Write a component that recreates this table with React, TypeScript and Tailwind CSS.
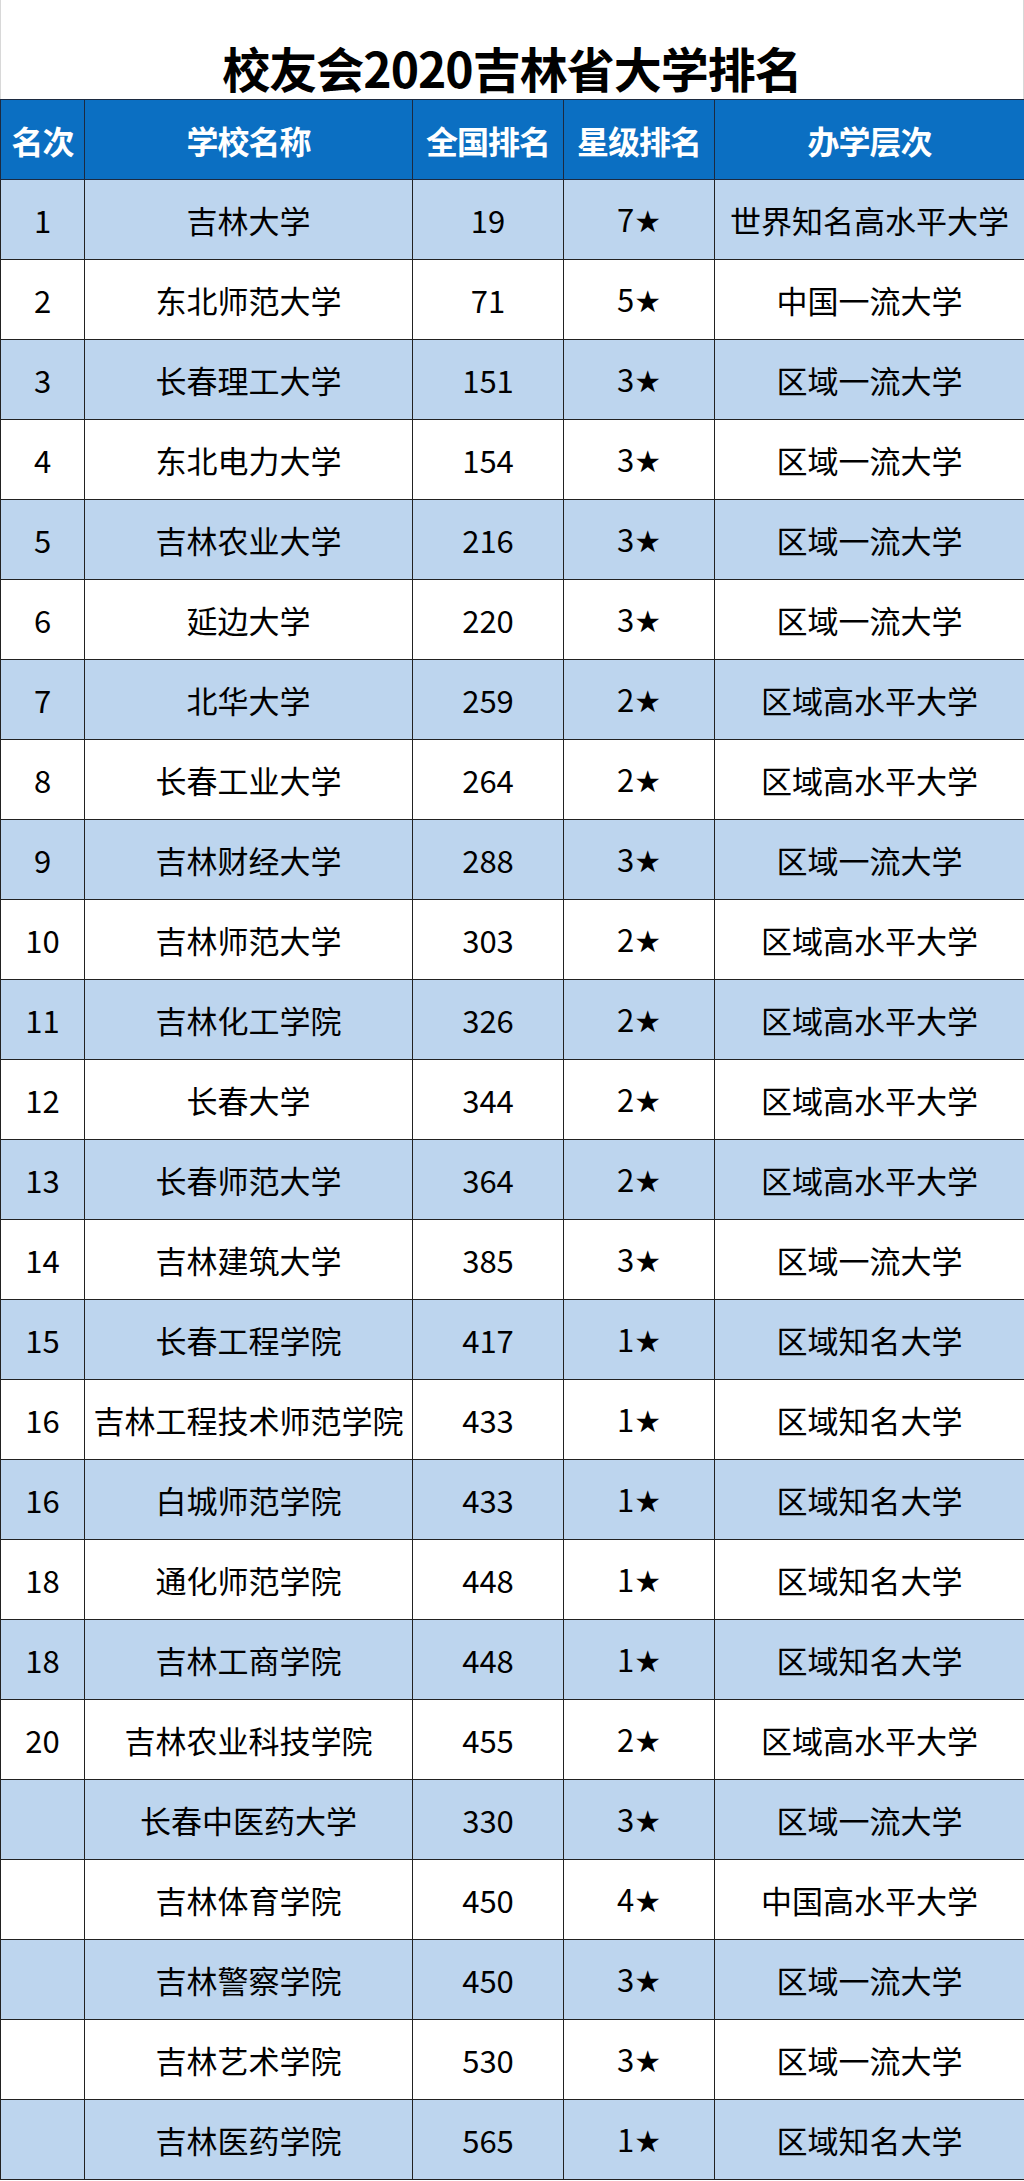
const rows: [string, string, string, string, string][] = [
  ["1", "吉林大学", "19", "7", "世界知名高水平大学"],
  ["2", "东北师范大学", "71", "5", "中国一流大学"],
  ["3", "长春理工大学", "151", "3", "区域一流大学"],
  ["4", "东北电力大学", "154", "3", "区域一流大学"],
  ["5", "吉林农业大学", "216", "3", "区域一流大学"],
  ["6", "延边大学", "220", "3", "区域一流大学"],
  ["7", "北华大学", "259", "2", "区域高水平大学"],
  ["8", "长春工业大学", "264", "2", "区域高水平大学"],
  ["9", "吉林财经大学", "288", "3", "区域一流大学"],
  ["10", "吉林师范大学", "303", "2", "区域高水平大学"],
  ["11", "吉林化工学院", "326", "2", "区域高水平大学"],
  ["12", "长春大学", "344", "2", "区域高水平大学"],
  ["13", "长春师范大学", "364", "2", "区域高水平大学"],
  ["14", "吉林建筑大学", "385", "3", "区域一流大学"],
  ["15", "长春工程学院", "417", "1", "区域知名大学"],
  ["16", "吉林工程技术师范学院", "433", "1", "区域知名大学"],
  ["16", "白城师范学院", "433", "1", "区域知名大学"],
  ["18", "通化师范学院", "448", "1", "区域知名大学"],
  ["18", "吉林工商学院", "448", "1", "区域知名大学"],
  ["20", "吉林农业科技学院", "455", "2", "区域高水平大学"],
  ["", "长春中医药大学", "330", "3", "区域一流大学"],
  ["", "吉林体育学院", "450", "4", "中国高水平大学"],
  ["", "吉林警察学院", "450", "3", "区域一流大学"],
  ["", "吉林艺术学院", "530", "3", "区域一流大学"],
  ["", "吉林医药学院", "565", "1", "区域知名大学"],
]

const headers = ["名次", "学校名称", "全国排名", "星级排名", "办学层次"]

export default function App() {
  return (
    <div className="w-[1024px] bg-white font-['Noto_Sans_CJK_SC',sans-serif] text-black">
      <div className="h-[99px] flex items-center justify-center border-x border-[#d8d8d8]">
        <h1 className="text-[48px] font-bold leading-none tracking-[-1px] pt-[34px]">校友会2020吉林省大学排名</h1>
      </div>
      <table className="w-[1024px] table-fixed border-collapse">
        <colgroup>
          <col className="w-[84px]" />
          <col className="w-[328px]" />
          <col className="w-[151px]" />
          <col className="w-[151px]" />
          <col className="w-[310px]" />
        </colgroup>
        <thead>
          <tr className="h-[80px] bg-[#0b6fc2] text-white">
            {headers.map((h) => (
              <th key={h} className="border border-[#1c2a40] text-[32px] font-bold leading-none text-center tracking-[-1px] whitespace-nowrap">
                {h}
              </th>
            ))}
          </tr>
        </thead>
        <tbody>
          {rows.map((r, i) => (
            <tr key={i} className={i % 2 === 0 ? "h-[80px] bg-[#bdd5ee]" : "h-[80px] bg-white"}>
              <td className="border border-[#222] text-center text-[31px] leading-none">{r[0]}</td>
              <td className="border border-[#222] text-center text-[31px] leading-none whitespace-nowrap">{r[1]}</td>
              <td className="border border-[#222] text-center text-[31px] leading-none">{r[2]}</td>
              <td className="border border-[#222] text-center text-[31px] leading-none">
                {r[3]}
                <span className="font-['DejaVu_Sans',sans-serif] text-[30px]">★</span>
              </td>
              <td className="border border-[#222] text-center text-[31px] leading-none whitespace-nowrap">{r[4]}</td>
            </tr>
          ))}
        </tbody>
      </table>
    </div>
  )
}
